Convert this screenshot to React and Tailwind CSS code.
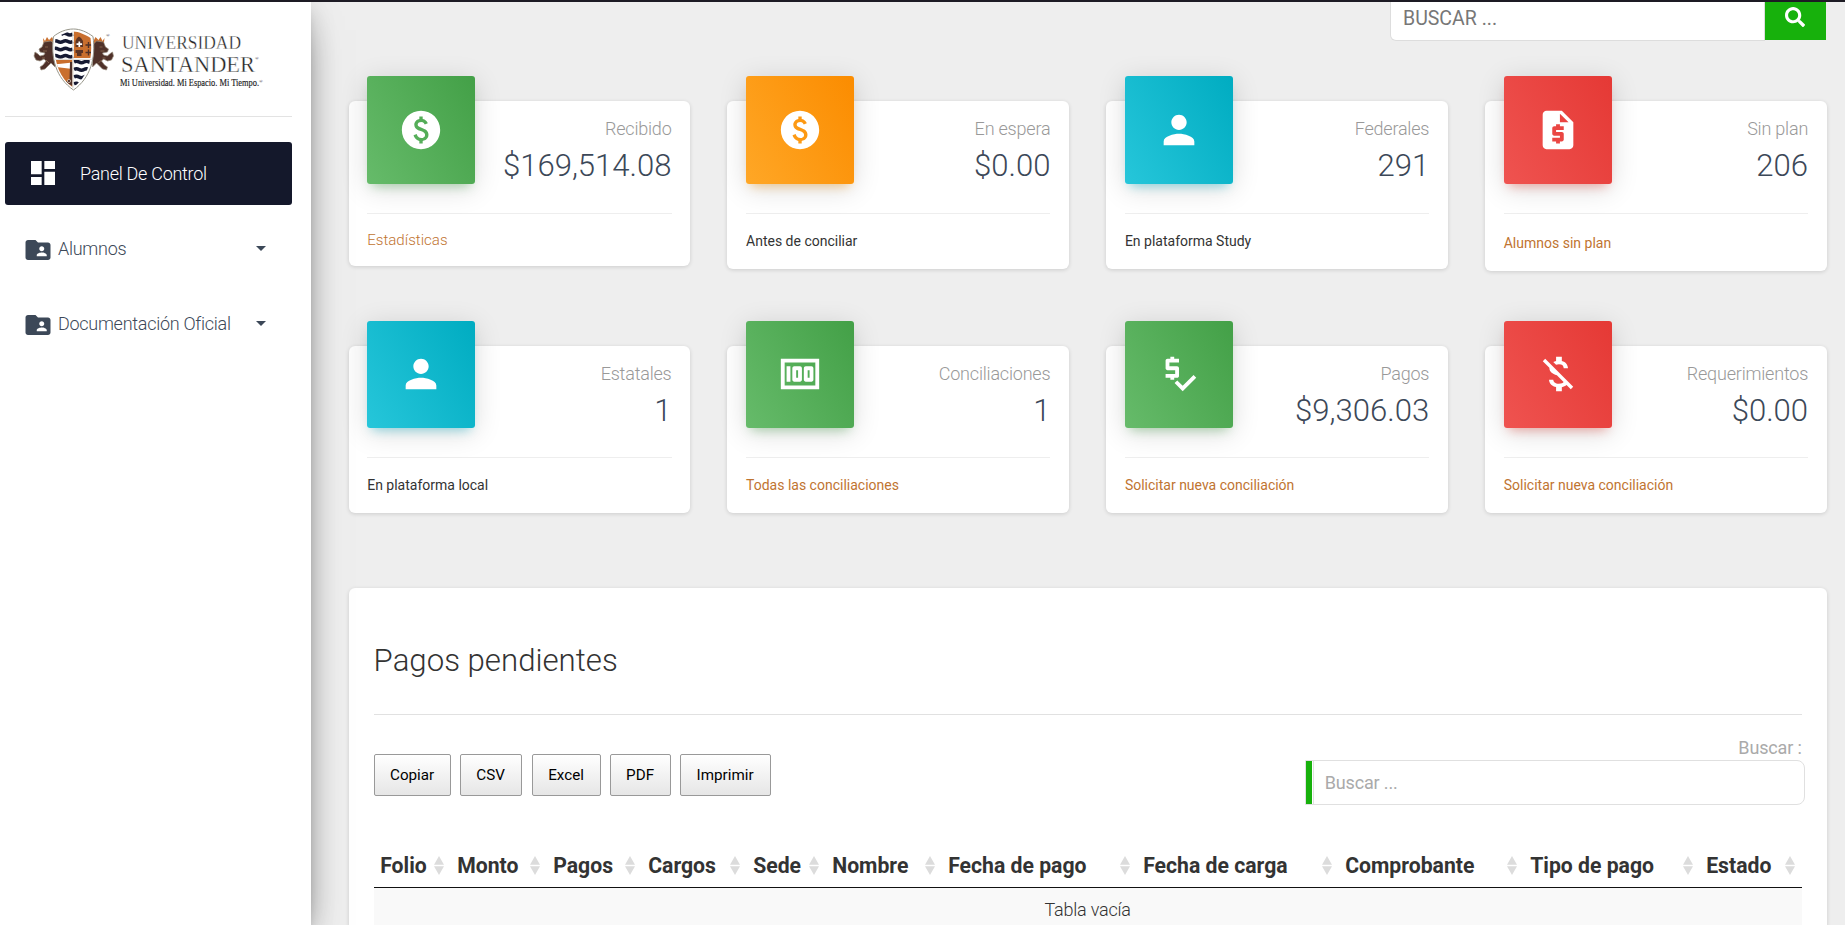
import React from "react";
import {
  MdPaid,
  MdPerson,
  MdRequestQuote,
  MdMoney,
  MdPriceCheck,
  MdMoneyOff,
  MdDashboard,
  MdFolderShared,
} from "react-icons/md";
import { FaSearch } from "react-icons/fa";

const tones = {
  green:
    "bg-[linear-gradient(60deg,#66bb6a,#43a047)] shadow-[0_5px_28px_0_rgba(0,0,0,0.14),0_7px_10px_-5px_rgba(76,175,80,0.4)]",
  orange:
    "bg-[linear-gradient(60deg,#ffa726,#fb8c00)] shadow-[0_5px_28px_0_rgba(0,0,0,0.14),0_7px_10px_-5px_rgba(255,152,0,0.4)]",
  cyan:
    "bg-[linear-gradient(60deg,#26c6da,#00acc1)] shadow-[0_5px_28px_0_rgba(0,0,0,0.14),0_7px_10px_-5px_rgba(0,188,212,0.4)]",
  red:
    "bg-[linear-gradient(60deg,#ef5350,#e53935)] shadow-[0_5px_28px_0_rgba(0,0,0,0.14),0_7px_10px_-5px_rgba(244,67,54,0.4)]",
};

const firstRow = [
  { tone: "green", Icon: MdPaid, label: "Recibido", value: "$169,514.08", foot: "Estadísticas", footClass: "h-[53px] pt-[15.5px] text-[15.1px] font-light text-[#bf7431]" },
  { tone: "orange", Icon: MdPaid, label: "En espera", value: "$0.00", foot: "Antes de conciliar", footClass: "h-[56px] pt-4 text-[14px] text-[#333]" },
  { tone: "cyan", Icon: MdPerson, label: "Federales", value: "291", foot: "En plataforma Study", footClass: "h-[56px] pt-4 text-[14px] text-[#333]" },
  { tone: "red", Icon: MdRequestQuote, label: "Sin plan", value: "206", foot: "Alumnos sin plan", footClass: "h-[58.2px] pt-[18px] text-[14px] text-[#bf7431]" },
];

const secondRow = [
  { tone: "cyan", Icon: MdPerson, label: "Estatales", value: "1", foot: "En plataforma local", footClass: "h-[55.6px] pt-4 text-[14px] text-[#333]" },
  { tone: "green", Icon: MdMoney, label: "Conciliaciones", value: "1", foot: "Todas las conciliaciones", footClass: "h-[55.6px] pt-4 text-[14px] text-[#bf7431]" },
  { tone: "green", Icon: MdPriceCheck, label: "Pagos", value: "$9,306.03", foot: "Solicitar nueva conciliación", footClass: "h-[55.6px] pt-4 text-[14px] text-[#bf7431]" },
  { tone: "red", Icon: MdMoneyOff, label: "Requerimientos", value: "$0.00", foot: "Solicitar nueva conciliación", footClass: "h-[55.6px] pt-4 text-[14px] text-[#bf7431]" },
];

const columns = [
  ["Folio", "w-[77px]"],
  ["Monto", "w-[96px]"],
  ["Pagos", "w-[95px]"],
  ["Cargos", "w-[105px]"],
  ["Sede", "w-[79px]"],
  ["Nombre", "w-[116px]"],
  ["Fecha de pago", "w-[195px]"],
  ["Fecha de carga", "w-[202px]"],
  ["Comprobante", "w-[185px]"],
  ["Tipo de pago", "w-[176px]"],
  ["Estado", "w-[102px]"],
];

function Logo() {
  return (
    <svg width="240" height="70" viewBox="30 24 240 70" className="block">
      <defs>
        <clipPath id="shield">
          <path d="M74 31.5C80 31.5 87 35 91.5 38C94 57 90 76 74 87.5C58 76 54 57 56.500 38C61 35 68 31.500 74 31.500Z" />
        </clipPath>
        <g id="lion">
          <path d="M44 38L46 41L48 37L50 40L53 37L55 41V47H45Z" fill="#c96f2e" />
          <path
            d="M45 42L52 41L56 45V67L52 63L49 66L46 69L42 70L41 67L44 65L47 61L45 59L41 61L37 60L35 56L36 52L39 54L41 56L45 55L46 53L41 52L40 49L43 47Z"
            fill="#4f3129"
            stroke="#9a8f80"
            strokeWidth="0.7"
          />
          <path d="M46 47h3M44 51h4M43 58h3M47 60l3 3" stroke="#8e6d54" strokeWidth="0.8" />
        </g>
      </defs>
      <use href="#lion" />
      <use href="#lion" transform="translate(149.500 0) scale(-1 1)" />
      <path
        d="M74.500 29C81 29 88 32 94 36.500C97 58 91.500 78 74.500 90C57 78 51.500 58 54.500 36.500C60 32 67 29 74.500 29Z"
        fill="#fff"
        stroke="#97968a"
        strokeWidth="1"
      />
      <g clipPath="url(#shield)">
        <rect x="54" y="29" width="20" height="30" fill="#fff" />
        <rect x="75" y="29" width="20" height="29" fill="#c96f2e" />
        <rect x="54" y="60" width="19.500" height="31" fill="#c96f2e" />
        <rect x="75" y="60" width="20" height="31" fill="#fff" />
        <g fill="none" stroke="#161a33" strokeWidth="3.600">
          <path d="M62 34.500q3 -2.500 6 -0.500t6 0" />
          <path d="M54 41.500q2.500 -1.500 5 0t5 0t5 0t5 0" />
          <path d="M54 49q2.500 -1.500 5 0t5 0t5 0t5 0" />
          <path d="M54 56.300q2.500 -1.500 5 0t5 0t5 0t5 0" />
          <path d="M75 62q2.500 -1.500 5 0t5 0t5 0t5 0" />
          <path d="M75 69.500q2.500 -1.500 5 0t5 0t5 0" />
          <path d="M75 77q2.500 -1.500 5 0t5 0t4 0" />
          <path d="M75 84q2.500 -1.500 4 0t4 0" />
        </g>
        <path d="M54 64.500L73.500 62.500V69L54 66.500Z" fill="#fff" />
        <path d="M71 62h2.500v24l-7 -4l4 -3z" fill="#4f3129" />
        <circle cx="70" cy="81" r="1.600" fill="none" stroke="#e6d8c8" strokeWidth="0.700" />
        <path d="M76.500 41L78 38L80 36.500L82 38L84 41V47H76.500ZM76.500 50H84V53H82.500V56H78V53H76.500Z" fill="#5b3425" />
        <path d="M80.300 41.500v5.500M77.500 44.200h5.600" stroke="#fff" strokeWidth="1.700" />
        <path d="M89.500 42v6M86.500 45h6M89.500 49.500v6M86.500 52.500h6" stroke="#4f3129" strokeWidth="1.400" />
      </g>
      <path d="M74 31.500V88M55 59.300H93" stroke="#e4e0da" strokeWidth="1.300" />
      <g fontFamily="'Liberation Serif', serif" fill="#222">
        <text x="107" y="37" fontSize="5">®</text>
        <text x="123" y="49.300" fontSize="18.500" textLength="119" lengthAdjust="spacingAndGlyphs" stroke="#fff" strokeWidth="0.350">UNIVERSIDAD</text>
        <text x="122" y="72" fontSize="22.500" textLength="134" lengthAdjust="spacingAndGlyphs" stroke="#fff" strokeWidth="0.400">SANTANDER</text>
        <text x="256" y="60" fontSize="5">®</text>
        <text x="121" y="86" fontSize="9.500" textLength="139" lengthAdjust="spacingAndGlyphs" stroke="#222" strokeWidth="0.150">Mi Universidad. Mi Espacio. Mi Tiempo.</text>
        <text x="260" y="82.500" fontSize="5">®</text>
      </g>
    </svg>
  );
}

function Caret() {
  return (
    <svg width="10" height="5" viewBox="0 0 10 5" className="fill-[#3c4858]">
      <path d="M0 0H10L5 5Z" />
    </svg>
  );
}

function SideItem({ label }) {
  return (
    <a className="flex h-[63px] items-center pr-[26px] pl-[18px] text-[#3c4858]">
      <MdFolderShared className="mt-0.5 size-[30px]" />
      <span className="ml-[5px] grow text-[18px] leading-6 font-light tracking-[-0.28px]">{label}</span>
      <Caret />
    </a>
  );
}

function Sidebar() {
  return (
    <aside className="relative z-10 w-[311px] shrink-0 bg-white shadow-[0_16px_38px_-12px_rgba(0,0,0,0.56),0_4px_25px_0_rgba(0,0,0,0.12),0_8px_10px_-5px_rgba(0,0,0,0.2)]">
      <div className="pt-[22px] pl-[29px]">
        <Logo />
      </div>
      <nav className="mt-[22px] mr-[19px] ml-[5px] flex flex-col gap-3 border-t border-[#e3e3e3] pt-[25px]">
        <a className="flex h-[63px] items-center rounded-[3px] bg-[#14182b] pl-[21.5px] text-white">
          <MdDashboard className="mb-px size-8" />
          <span className="ml-[21.5px] text-[18px] font-light tracking-[-0.28px]">Panel De Control</span>
        </a>
        <SideItem label="Alumnos" />
        <SideItem label="Documentación Oficial" />
      </nav>
    </aside>
  );
}

function StatCard({ tone, Icon, label, value, foot, footClass }) {
  return (
    <article className="rounded-md bg-white px-[18.6px] shadow-[0_1px_4px_0_rgba(0,0,0,0.14)]">
      <div className="flex h-[111.8px] items-start justify-between">
        <div className={"-mt-[25px] flex size-[107.8px] shrink-0 items-center justify-center rounded-[3px] text-white " + tones[tone]}>
          <Icon className="size-[46px]" />
        </div>
        <div className="pt-4 text-right">
          <p className="text-[18px] leading-6 font-light tracking-[-0.2px] text-[#999]">{label}</p>
          <p className="mt-[4.2px] text-[31.1px] leading-[42px] font-light text-[#3c4858]">{value}</p>
        </div>
      </div>
      <div className={"border-t border-[#eee] leading-[22px] " + footClass}>{foot}</div>
    </article>
  );
}

function TopSearch() {
  return (
    <div className="flex h-[39px] justify-end overflow-hidden pr-[19px]">
      <div className="flex w-[375px] items-center rounded-bl-md border-r border-b border-l border-[#ddd] bg-white pb-[5px] pl-3 text-[19.5px] text-[#777]">
        BUSCAR ...
      </div>
      <button className="flex h-[38px] w-[61px] items-center justify-center bg-[#17b10c] pr-px pb-[8px] text-white">
        <FaSearch className="size-5" />
      </button>
    </div>
  );
}

function SortIcon() {
  return (
    <svg width="10" height="19" viewBox="0 0 10 19" className="fill-[#dcdcdc]">
      <path d="M5 0L10 8.700H0ZM0 10.300H10L5 19Z" />
    </svg>
  );
}

function PendingPayments() {
  return (
    <section className="mt-[75px] h-[338px] rounded-t-md bg-white px-[25px] shadow-[0_1px_4px_0_rgba(0,0,0,0.14)]">
      <h2 className="h-[126px] pt-[51px] text-[31.2px] leading-[43px] font-light text-[#333]">Pagos pendientes</h2>
      <div className="flex h-[133px] items-start justify-between border-t border-[#e1e1e1]">
        <div className="flex pt-[39px] text-[15.2px] text-black [&>button]:h-[42px] [&>button]:rounded-[2px] [&>button]:border [&>button]:border-[#999] [&>button]:bg-linear-to-b [&>button]:from-white [&>button]:to-[#e6e6e6]">
          <button className="w-[77px]">Copiar</button>
          <button className="ml-[9px] w-[62px]">CSV</button>
          <button className="ml-[10px] w-[69px]">Excel</button>
          <button className="ml-[9px] w-[61px]">PDF</button>
          <button className="ml-[9px] w-[91px]">Imprimir</button>
        </div>
        <div className="-mr-[3px] w-[500px] pt-[21px]">
          <p className="pr-[3px] text-right text-[18px] leading-6 tracking-[-0.15px] text-[#aaa]">Buscar :</p>
          <div className="flex h-[45px] rounded-r-lg border border-[#e0e0e0]">
            <div className="w-1.5 bg-[#17b10c]" />
            <div className="ml-px flex grow items-center border-l border-[#e0e0e0] pl-[11px] text-[18px] tracking-[-0.15px] text-[#aaa]">Buscar ...</div>
          </div>
        </div>
      </div>
      <div className="w-[1428px]">
        <div className="flex h-[41px] border-b border-[#111] text-[21.2px] font-bold text-[#333]">
          {columns.map(([name, width]) => (
            <div key={name} className={"flex shrink-0 items-center justify-between pr-[7px] pb-[2px] pl-[6.6px] whitespace-nowrap " + width}>
              {name}
              <SortIcon />
            </div>
          ))}
        </div>
        <div className="h-[38px] bg-[#f9f9f9] pt-[10px] text-center text-[18px] leading-6 font-light tracking-[-0.2px] text-[#333]">Tabla vacía</div>
      </div>
    </section>
  );
}

export default function App() {
  return (
    <div className="flex h-[925px] w-[1845px] flex-col overflow-hidden bg-[#eee] font-[Roboto,sans-serif]">
      <div className="relative z-20 h-0.5 shrink-0 bg-[#1d1b24]" />
      <div className="flex min-h-0 grow">
        <Sidebar />
        <main className="min-w-0 grow">
          <TopSearch />
          <div className="pr-[18.3px] pl-[37.6px]">
            <div className="mt-[59.9px] grid grid-cols-4 items-start gap-x-[37.3px]">
              {firstRow.map((card) => (
                <StatCard key={card.label} {...card} />
              ))}
            </div>
            <div className="mt-[74.7px] grid grid-cols-4 items-start gap-x-[37.3px]">
              {secondRow.map((card) => (
                <StatCard key={card.label} {...card} />
              ))}
            </div>
            <PendingPayments />
          </div>
        </main>
      </div>
    </div>
  );
}
